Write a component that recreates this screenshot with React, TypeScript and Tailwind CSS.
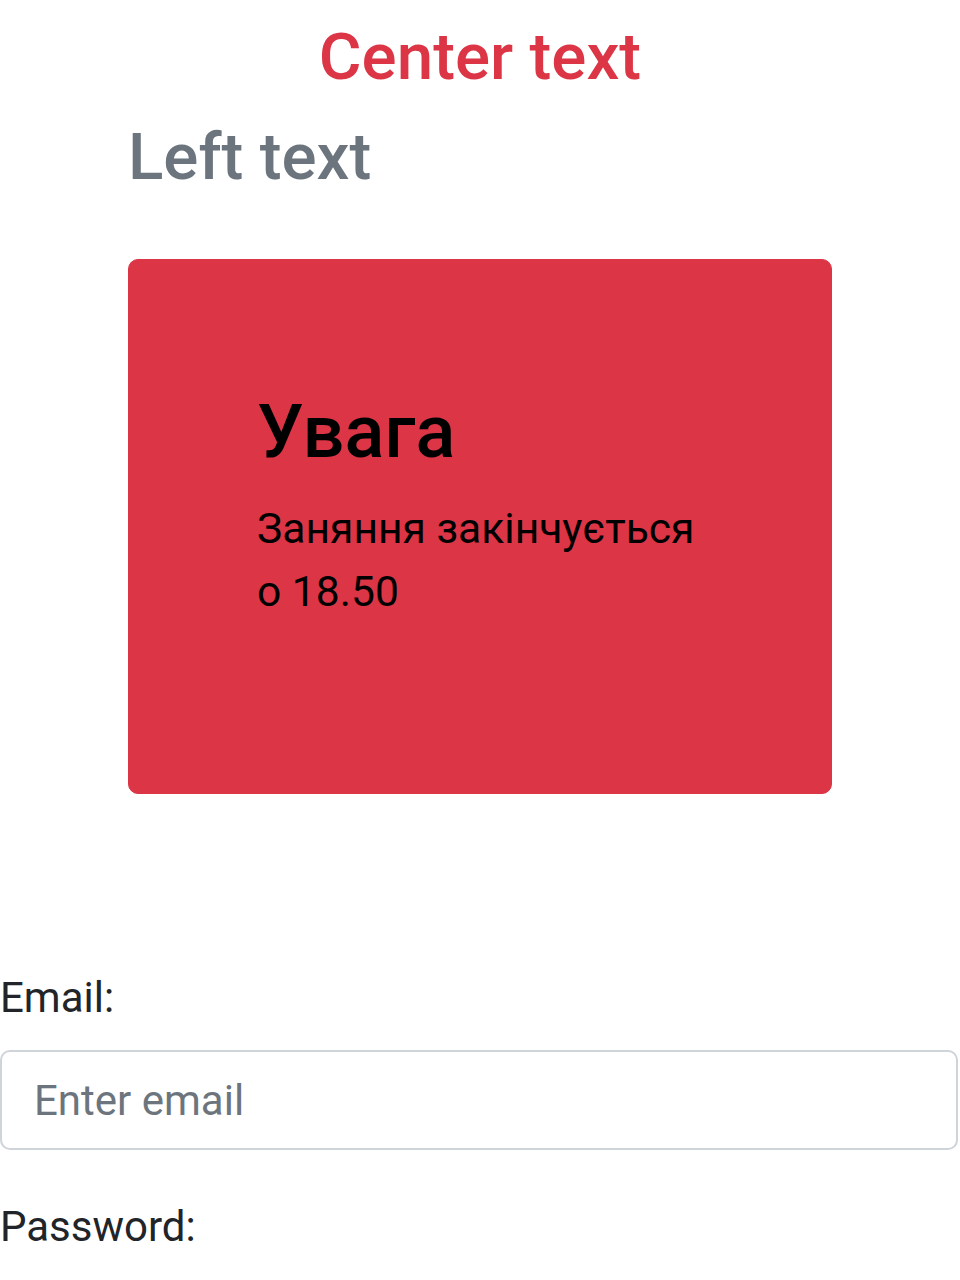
import React from "react";

export default function App() {
  return (
    <div
      className="min-h-[1280px] bg-white text-[#212529] text-[42px] leading-[1.5]"
      style={{ fontFamily: "Roboto, 'Noto Sans', sans-serif" }}
    >
      <div className="pt-[18px]">
        <h1 className="text-center text-[65.5px] leading-[1.2] font-medium text-[#dc3545] mb-[21px]">
          Center text
        </h1>
        <div className="px-[128px]">
          <h2 className="text-[65.5px] leading-[1.2] font-medium text-[#6c757d] mb-[21px]">
            Left text
          </h2>
          <div className="mt-[63px] bg-[#dc3545] rounded-[10px] border border-[#dc3545] p-[128px] text-black">
            <h3 className="text-[74px] leading-[88px] font-medium mb-[21px]">Увага</h3>
            <p className="mb-[42px] max-w-[450px] text-[42.6px] leading-[63px]">
              Заняння закінчується о 18.50
            </p>
          </div>
        </div>
      </div>
      <form className="mt-[172px] pr-[2px]">
        <div className="mb-[45px]">
          <label className="block mb-[21px]">Email:</label>
          <input
            type="email"
            placeholder="Enter email"
            className="block w-full h-[100px] border-2 border-[#ced4da] rounded-[10px] px-[32px] text-[42px] text-[#495057] placeholder:text-[#6c757d] bg-white outline-none"
          />
        </div>
        <div className="mb-[42px]">
          <label className="block mb-[26px]">Password:</label>
          <input
            type="password"
            placeholder="Enter password"
            className="block w-full h-[100px] border-2 border-[#ced4da] rounded-[10px] px-[32px] text-[42px] text-[#495057] placeholder:text-[#6c757d] bg-white outline-none"
          />
        </div>
      </form>
    </div>
  );
}
